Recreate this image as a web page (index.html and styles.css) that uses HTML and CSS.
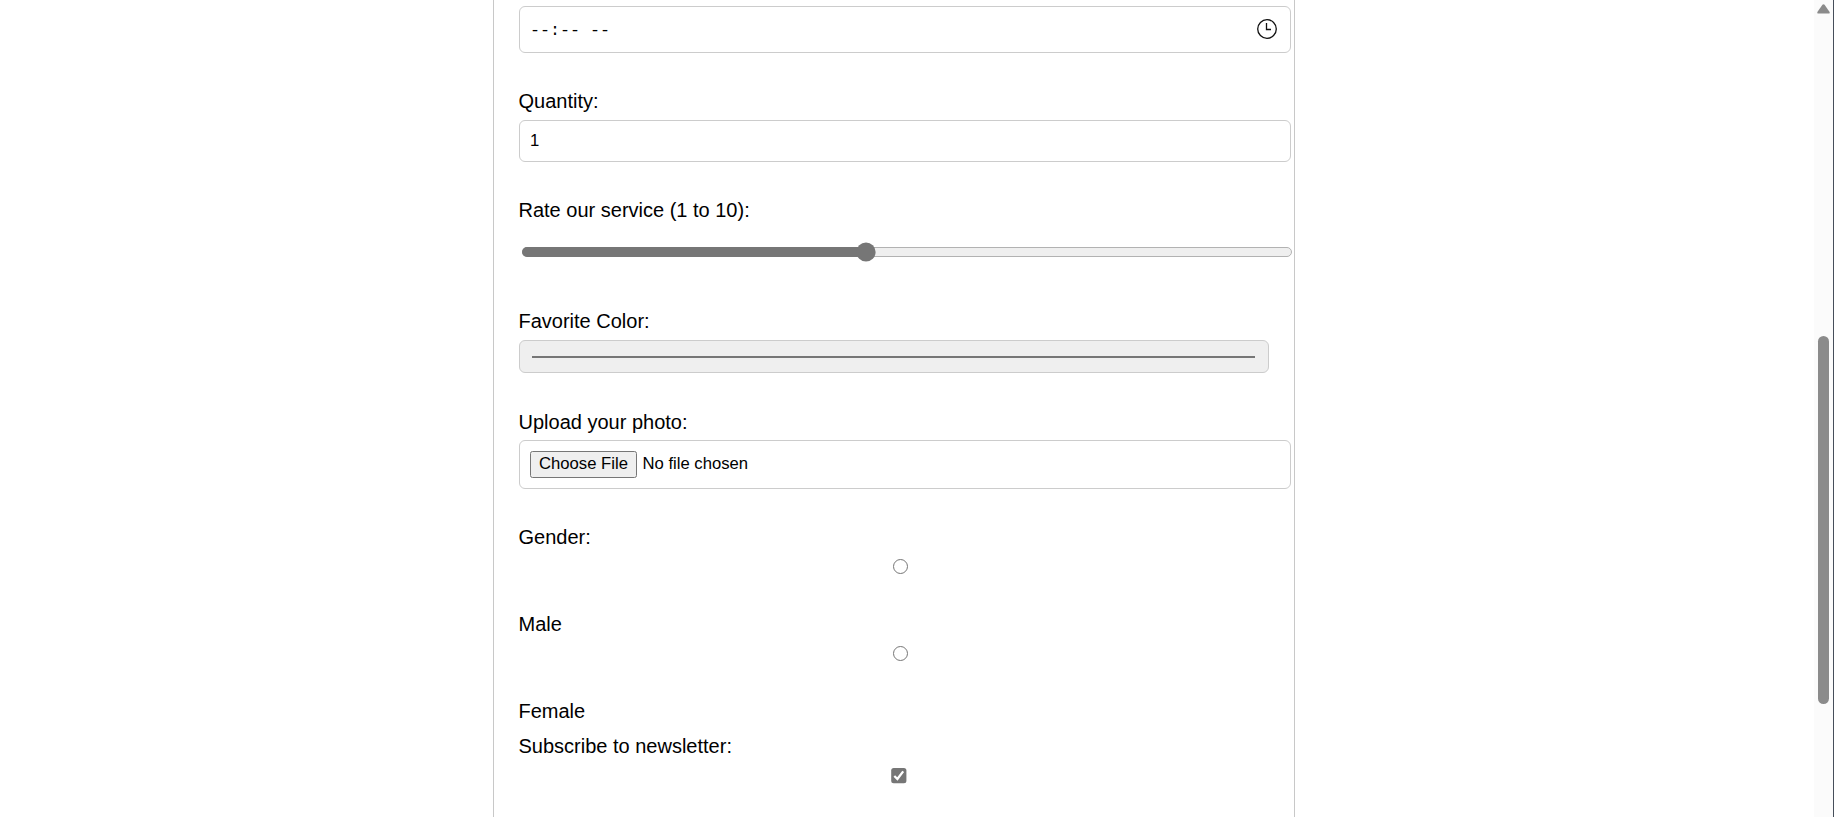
FILE: index.html
```html
<!DOCTYPE html>
<html lang="en">
<head>
<meta charset="utf-8">
<title>Form</title>
<link rel="stylesheet" href="styles.css">
</head>
<body>
<main class="page">
  <form class="form">
    <div class="field time">
      <span class="time-text">--:-- --</span>
      <svg class="clock" width="20" height="20" viewBox="0 0 20 20" fill="none" stroke="#111"><circle cx="10" cy="10" r="9.3" stroke-width="1.3"/><path d="M9.5 4v6.5H14" stroke-width="1.3"/></svg>
    </div>
    <div class="group quantity">
      <label>Quantity:</label>
      <div class="field number">1</div>
    </div>
    <div class="group rate">
      <label>Rate our service (1 to 10):</label>
      <svg class="slider" width="770" height="20" viewBox="0 0 770 20"><rect x=".5" y="5.5" width="769" height="9" rx="4.5" fill="#efefef" stroke="#b2b2b2"/><path d="M5 5H344V15H5A5 5 0 0 1 5 5Z" fill="#767676"/><circle cx="344" cy="10" r="9.6" fill="#767676"/></svg>
    </div>
    <div class="group color">
      <label>Favorite Color:</label>
      <div class="field swatch-box"><div class="swatch"></div></div>
    </div>
    <div class="group upload">
      <label>Upload your photo:</label>
      <div class="field file"><button type="button" class="choose">Choose File</button><span>No file chosen</span></div>
    </div>
    <div class="group gender">
      <label>Gender:</label>
      <span class="radio"></span>
    </div>
    <div class="group male">
      <label>Male</label>
      <span class="radio"></span>
    </div>
    <div class="group female"><label>Female</label></div>
    <div class="group newsletter">
      <label>Subscribe to newsletter:</label>
      <svg class="check" width="16" height="16" viewBox="0 0 16 16"><rect x=".2" y="0" width="15.2" height="15.2" rx="2.5" fill="#767676"/><path d="M3.3 8L6.4 11L12.2 3.4" fill="none" stroke="#fff" stroke-width="2.3"/></svg>
    </div>
  </form>
</main>
<aside class="scrollbar">
  <svg class="arrow" width="13" height="10" viewBox="0 0 13 10"><path d="M5.4.8Q6.5-.3 7.6.8L12.6 8Q13 9.6 11.6 9.6H1.4Q0 9.6.4 8Z" fill="#8b8b8b"/></svg>
  <div class="thumb"></div>
</aside>
</body>
</html>
```
FILE: styles.css
```css
* { box-sizing: border-box; }
body {
  margin: 0;
  height: 817px;
  display: flex;
  overflow: hidden;
  background: #fff;
  color: #000;
  font-family: "Liberation Sans", Arial, sans-serif;
}
.page { flex: 1; padding-left: 493px; }
.form {
  width: 802px;
  height: 817px;
  padding: 6px 3px 0 25px;
  border: solid #c8c8c8;
  border-width: 0 1px;
}
.group { display: flex; flex-direction: column; }
label { font-size: 20px; line-height: 23px; margin-left: -0.5px; }
.field {
  width: 772px;
  border: 1px solid #ccc;
  border-radius: 6px;
  display: flex;
  align-items: center;
  font-size: 16.67px;
}
.time { height: 47px; padding: 0 13px 0 10px; justify-content: space-between; }
.time-text { font-family: "Liberation Mono", monospace; white-space: pre; padding-top: 2px; }
.clock { margin-bottom: 1px; }
.quantity { margin-top: 37px; gap: 7px; }
.number { height: 42px; padding: 0 10px; }
.rate { margin-top: 37px; gap: 20px; }
.slider { margin-left: 3px; }
.color { margin-top: 48px; gap: 7px; }
.swatch-box { width: 750px; height: 33px; padding: 0 13px 0 12px; background: #efefef; }
.swatch { width: 100%; height: 2px; margin-top: 1px; background: #767676; }
.upload { margin-top: 38px; gap: 6px; }
.file { height: 49px; padding: 0 10px 2px; }
.file span { margin-left: 5.5px; }
.choose {
  width: 107px;
  height: 27px;
  margin-top: 1px;
  padding: 0;
  font: inherit;
  color: #000;
  background: #efefef;
  border: 1px solid #767676;
  border-radius: 2.5px;
}
.gender { margin-top: 37px; gap: 10px; }
.radio {
  width: 15px;
  height: 15px;
  margin-left: 373.5px;
  border: 1.3px solid #767676;
  border-radius: 50%;
}
.male { margin-top: 39px; gap: 10px; }
.female { margin-top: 39px; }
.newsletter { margin-top: 12px; gap: 10px; }
.check { margin-left: 372px; }
.scrollbar {
  width: 20px;
  padding: 4px 0 0 4px;
  background: #fbfbfb;
  border-right: 1px solid #464e5a;
}
.arrow { display: block; margin-left: -1px; }
.thumb { width: 11px; height: 368px; margin-top: 322px; border-radius: 6px; background: #8b8b8b; }
```
